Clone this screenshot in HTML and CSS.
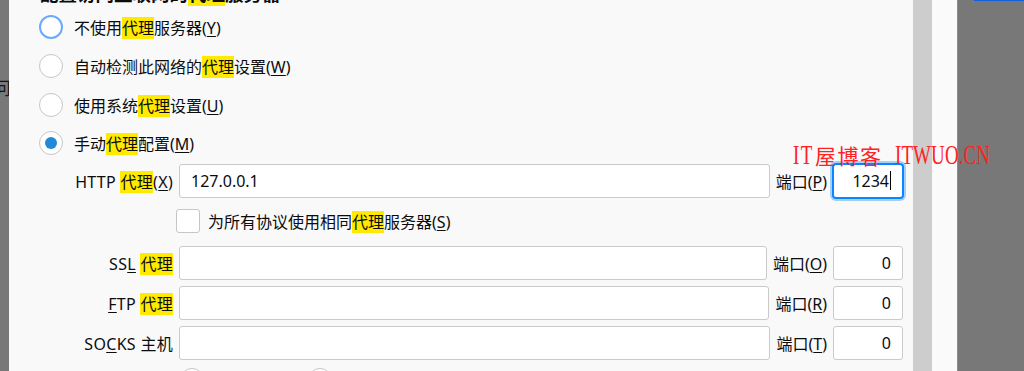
FILE: index.html
```html
<!DOCTYPE html>
<html lang="zh-CN">
<head>
<meta charset="utf-8">
<title>连接设置</title>
<link rel="stylesheet" href="styles.css">
</head>
<body>
<div class="screen">
  <div class="backdrop-left"><span class="behind-char">问</span></div>
  <div class="dialog">
    <div class="heading">配置访问互联网的<mark>代理</mark>服务器</div>
    <div class="radios">
      <div class="radio-row"><span class="radio hover"></span><span>不使用<mark>代理</mark>服务器(<u>Y</u>)</span></div>
      <div class="radio-row"><span class="radio"></span><span>自动检测此网络的<mark>代理</mark>设置(<u>W</u>)</span></div>
      <div class="radio-row"><span class="radio"></span><span>使用系统<mark>代理</mark>设置(<u>U</u>)</span></div>
      <div class="radio-row"><span class="radio checked"></span><span>手动<mark>代理</mark>配置(<u>M</u>)</span></div>
    </div>
    <div class="proxy-form">
      <div class="field-row">
        <span class="field-label">HTTP <mark>代理</mark>(<u>X</u>)</span>
        <div class="input host">127.0.0.1</div>
        <span class="port-label">端口(<u>P</u>)</span>
        <div class="input port focused">1234<span class="caret"></span></div>
      </div>
      <div class="check-row"><span class="checkbox"></span><span>为所有协议使用相同<mark>代理</mark>服务器(<u>S</u>)</span></div>
      <div class="field-row">
        <span class="field-label">SS<u>L</u> <mark>代理</mark></span>
        <div class="input host"></div>
        <span class="port-label">端口(<u>O</u>)</span>
        <div class="input port">0</div>
      </div>
      <div class="field-row">
        <span class="field-label"><u>F</u>TP <mark>代理</mark></span>
        <div class="input host"></div>
        <span class="port-label">端口(<u>R</u>)</span>
        <div class="input port">0</div>
      </div>
      <div class="field-row">
        <span class="field-label">SO<u>C</u>KS 主机</span>
        <div class="input host"></div>
        <span class="port-label">端口(<u>T</u>)</span>
        <div class="input port">0</div>
      </div>
      <div class="version-row">
        <div class="version-item"><span class="radio"></span><span>SOCKS v4</span></div>
        <div class="version-item"><span class="radio checked"></span><span>SOCKS v5</span></div>
      </div>
    </div>
  </div>
  <div class="scroll-track"></div>
  <div class="gutter"></div>
  <div class="backdrop-right"><div class="blue-line"></div></div>
</div>
<div class="watermark"><span class="wm-latin wm-a">IT</span><span class="wm-cjk">屋博客</span><span class="wm-latin wm-b">ITWUO.CN</span></div>
</body>
</html>
```

FILE: styles.css
```css
html, body {
  margin: 0;
  padding: 0;
}

body {
  width: 1024px;
  height: 371px;
  overflow: hidden;
  position: relative;
  background: #787878;
  font-family: "Noto Sans", "Noto Sans CJK SC", sans-serif;
  color: #0c0c0d;
}

.screen {
  display: flex;
  height: 371px;
}

.backdrop-left {
  width: 9px;
  flex: none;
  background: #787878;
  overflow: hidden;
  padding-top: 77px;
  box-sizing: border-box;
}

.behind-char {
  display: block;
  font-family: "Noto Sans CJK SC", sans-serif;
  font-size: 18px;
  line-height: 20px;
  margin-left: -7px;
  color: #151515;
  white-space: nowrap;
}

.dialog {
  width: 904px;
  flex: none;
  background: #f9f9fa;
  padding: 0 10px 0 30px;
  box-sizing: border-box;
  overflow: hidden;
}

.heading {
  font-size: 18.5px;
  line-height: 20px;
  margin: -16px 0 0 1px;
  font-weight: 600;
  white-space: nowrap;
}

mark {
  background: #ffea00;
  color: inherit;
}

u {
  text-decoration-thickness: 1px;
  text-underline-offset: 2px;
}

.radios {
  margin-top: 4px;
  display: flex;
  flex-direction: column;
}

.radio-row {
  height: 38.7px;
  display: flex;
  align-items: center;
  gap: 11px;
  font-size: 16px;
  white-space: nowrap;
}

.radio {
  width: 24px;
  height: 24px;
  box-sizing: border-box;
  border-radius: 50%;
  border: 1.5px solid #c6c6c6;
  background: #fff;
  flex: none;
  display: flex;
  align-items: center;
  justify-content: center;
}

.radio.hover {
  border: 2px solid #6aa9ff;
}

.radio.checked::after {
  content: "";
  width: 12px;
  height: 12px;
  border-radius: 50%;
  background: #2189d8;
}

.proxy-form {
  margin-top: 1px;
  display: flex;
  flex-direction: column;
  gap: 6px;
}

.field-row {
  display: flex;
  align-items: center;
  gap: 6px;
  height: 34px;
  font-size: 16px;
  white-space: nowrap;
}

.field-label {
  width: 134px;
  flex: none;
  text-align: right;
  letter-spacing: 0.3px;
}

.port-label {
  flex: none;
}

.input {
  height: 34px;
  box-sizing: border-box;
  border: 1px solid #cacaca;
  border-radius: 3px;
  background: #fff;
  display: flex;
  align-items: center;
  padding: 0 11px;
}

.host {
  flex: 1;
  min-width: 0;
}

.port {
  width: 70px;
  flex: none;
  justify-content: flex-end;
}

.port.focused {
  border-color: #0a84ff;
  box-shadow: 0 0 0 1px #0a84ff, 0 0 0 3px rgba(10, 132, 255, 0.35);
}

.caret {
  width: 1px;
  height: 19px;
  background: #000;
  margin-left: 1px;
}

.check-row {
  display: flex;
  align-items: center;
  gap: 8px;
  height: 24px;
  margin: 5px 0 7px 137px;
  font-size: 16px;
  white-space: nowrap;
}

.checkbox {
  width: 24px;
  height: 24px;
  box-sizing: border-box;
  border: 1.5px solid #c6c6c6;
  border-radius: 3px;
  background: #fff;
  flex: none;
}

.version-row {
  display: flex;
  margin: 2px 0 0 141px;
  font-size: 16px;
}

.version-item {
  width: 128px;
  display: flex;
  align-items: center;
  gap: 11px;
  height: 24px;
  white-space: nowrap;
}

.scroll-track {
  width: 19px;
  flex: none;
  background: #cdcdcd;
}

.gutter {
  width: 25px;
  flex: none;
  background: #fafafa;
}

.backdrop-right {
  flex: 1;
  background: #787878;
  border-left: 1px solid #8c8c8c;
  position: relative;
}

.blue-line {
  position: absolute;
  top: 0;
  left: 16px;
  right: 0;
  height: 1px;
  background: #1463dc;
}

.watermark {
  position: absolute;
  left: 793px;
  top: 141px;
  display: flex;
  align-items: center;
  height: 28px;
  color: #ff2222;
  white-space: nowrap;
}

.wm-cjk {
  font-family: "Noto Sans CJK SC", sans-serif;
  font-size: 21px;
  letter-spacing: 1.5px;
  line-height: 28px;
  width: 72px;
}

.wm-latin {
  display: inline-block;
  font-family: "Liberation Serif", serif;
  font-size: 27px;
  line-height: 28px;
  transform: scaleX(0.7);
  transform-origin: left center;
}

.wm-a {
  width: 22px;
  letter-spacing: 2px;
}

.wm-b {
  width: 96px;
  margin-left: 8px;
  letter-spacing: 0.2px;
}
```
